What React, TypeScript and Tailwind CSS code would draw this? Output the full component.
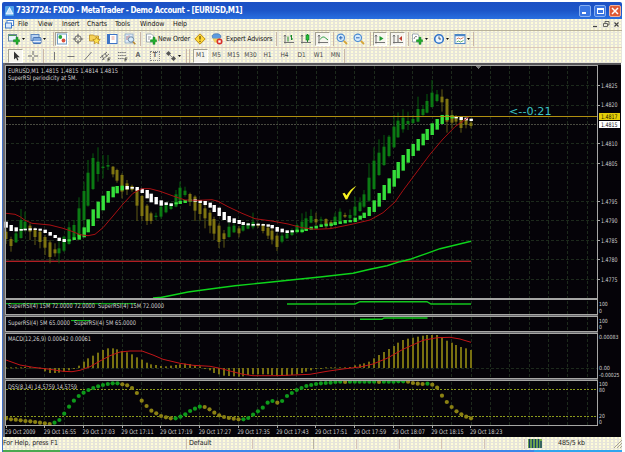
import React from "react";

type Candle = [up: number, high: number, top: number, bottom: number, low: number];
type Band = [kind: number, top: number, bottom: number];

const X0 = 6.1;
const STEP = 4.843;
const px = (i: number) => X0 + STEP * i;

// Price bars of the first section, in thirds of a pixel below y = 140
const barsA: Candle[] = [
  [0, 265, 275, 297, 312], [0, 290, 297, 318, 335], [1, 262, 280, 307, 309], [1, 207, 240, 294, 296], [1, 215, 245, 270, 275],
  [0, 250, 257, 275, 300], [0, 262, 268, 291, 315], [0, 268, 275, 306, 325], [0, 285, 291, 323, 345], [0, 300, 307, 351, 370],
  [0, 310, 328, 340, 350], [1, 300, 325, 340, 370], [1, 287, 290, 332, 336], [1, 245, 262, 312, 314], [1, 240, 255, 295, 298],
  [1, 172, 205, 290, 292], [1, 125, 153, 240, 270], [1, 60, 98, 197, 200], [1, 40, 54, 147, 150], [1, 22, 65, 102, 125],
  [1, 45, 80, 84, 115], [1, 45, 75, 80, 90], [0, 78, 80, 103, 112], [0, 86, 90, 122, 128], [0, 100, 105, 155, 175],
  [0, 120, 130, 150, 165], [0, 134, 138, 150, 155], [0, 146, 148, 197, 243], [0, 165, 168, 228, 243], [0, 192, 197, 243, 255],
  [0, 215, 220, 243, 252], [1, 218, 227, 231, 240], [1, 190, 200, 230, 236], [1, 190, 195, 217, 220], [1, 188, 192, 207, 210],
  [1, 150, 163, 200, 202], [1, 125, 143, 180, 190], [1, 140, 152, 165, 170], [0, 158, 162, 185, 198], [0, 166, 170, 212, 243],
  [0, 180, 190, 222, 243], [0, 195, 205, 235, 265], [0, 210, 218, 257, 280], [0, 230, 237, 281, 300], [0, 250, 257, 306, 324],
  [0, 270, 280, 297, 323], [1, 248, 260, 291, 293], [1, 247, 257, 277, 279], [0, 258, 265, 280, 292], [1, 250, 257, 272, 275],
  [1, 247, 252, 266, 268], [1, 218, 245, 262, 268], [0, 248, 252, 258, 264], [0, 250, 255, 273, 280], [0, 257, 263, 287, 297],
  [0, 264, 272, 299, 313], [0, 280, 287, 321, 333], [1, 280, 287, 305, 310], [1, 274, 280, 295, 297], [1, 265, 270, 285, 288],
  [1, 250, 255, 278, 280], [1, 220, 245, 278, 280], [1, 215, 235, 270, 272], [1, 208, 228, 248, 250], [0, 218, 237, 247, 255],
  [1, 230, 238, 242, 252],
];
// The rest, in thirds of a pixel below y = 70
const barsB: Candle[] = [
  [0, 445, 447, 465, 476], [0, 450, 456, 467, 474], [1, 428, 440, 465, 468], [1, 415, 425, 455, 460], [0, 428, 435, 440, 444],
  [1, 418, 435, 445, 450], [1, 380, 410, 437, 440], [1, 382, 397, 423, 426], [1, 360, 373, 410, 414], [1, 280, 323, 392, 396],
  [1, 232, 272, 357, 360], [1, 208, 248, 315, 318], [1, 195, 230, 285, 288], [1, 195, 200, 258, 262], [1, 135, 170, 232, 234],
  [1, 127, 152, 202, 204], [1, 118, 143, 178, 188], [1, 125, 153, 162, 180], [1, 135, 147, 159, 162], [1, 80, 117, 155, 157],
  [1, 105, 117, 135, 138], [1, 72, 93, 128, 130], [1, 30, 68, 111, 113], [1, 60, 73, 93, 97], [0, 58, 80, 97, 125],
  [0, 85, 87, 155, 188], [0, 120, 135, 158, 175], [0, 135, 140, 155, 165], [0, 140, 145, 174, 188], [0, 145, 150, 165, 175],
  [0, 152, 158, 168, 175],
];
const bandsA: Band[] = [
  [0, 245, 263], [0, 255, 273], [0, 262, 274], [0, 267, 272], [0, 266, 271], [0, 265, 271], [0, 265, 270], [0, 266, 272],
  [0, 269, 279], [0, 276, 287], [0, 285, 294], [0, 293, 303], [0, 297, 306], [1, 298, 304], [1, 292, 300], [1, 282, 299],
  [1, 262, 292], [1, 238, 277], [1, 208, 258], [1, 185, 235], [1, 167, 211], [1, 153, 188], [1, 140, 172], [1, 138, 160],
  [1, 137, 151], [0, 138, 148], [0, 141, 146], [0, 141, 152], [0, 146, 159], [0, 150, 175], [0, 161, 187], [0, 171, 193],
  [0, 181, 197], [0, 187, 195], [0, 190, 198], [1, 187, 193], [1, 182, 192], [1, 180, 189], [1, 178, 184], [0, 178, 185],
  [0, 180, 189], [0, 183, 195], [0, 188, 203], [0, 195, 216], [0, 203, 228], [0, 216, 240], [0, 228, 247], [0, 235, 249],
  [0, 240, 252], [0, 246, 255], [0, 250, 256], [0, 252, 257], [0, 251, 256], [0, 252, 257], [0, 253, 260], [0, 255, 265],
  [0, 261, 275], [0, 266, 277], [0, 271, 279], [0, 271, 277], [1, 269, 276], [1, 269, 276], [1, 265, 273], [1, 260, 269],
  [1, 257, 266], [1, 253, 261],
];
const bandsB: Band[] = [
  [1, 461, 469], [1, 460, 468], [1, 456, 465], [1, 454, 462], [1, 450, 460], [1, 450, 457], [1, 443, 456], [1, 437, 449],
  [1, 428, 444], [1, 411, 438], [1, 391, 426], [1, 369, 410], [1, 345, 390], [1, 325, 370], [1, 300, 350], [1, 276, 325],
  [1, 255, 302], [1, 237, 278], [1, 222, 258], [1, 207, 242], [1, 191, 226], [1, 177, 210], [1, 160, 195], [1, 147, 179],
  [1, 135, 162], [1, 135, 150], [1, 137, 145], [0, 139, 145], [0, 141, 150], [0, 143, 151], [0, 146, 153],
];
const bars: Candle[] = [
  ...barsA.map((c) => [c[0], ...c.slice(1).map((v) => 140 + v / 3)] as Candle),
  ...barsB.map((c) => [c[0], ...c.slice(1).map((v) => 70 + v / 3)] as Candle),
];
const bands: Band[] = [
  ...bandsA.map((b) => [b[0], 140 + b[1] / 3, 140 + b[2] / 3] as Band),
  ...bandsB.map((b) => [b[0], 70 + b[1] / 3, 70 + b[2] / 3] as Band),
];

const macd = [
  217, 217, 217, 217, 216, 217, 217, 218, 229, 234, 234, 233, 230, 226, 222, 212, 200, 190, 182, 173, 165, 160, 160, 163, 168, 172,
  178, 187, 194, 203, 208, 210, 213, 214, 212, 210, 208, 206, 207, 210, 214, 222, 226, 234, 238, 242, 243, 244, 245, 244, 240, 238,
  238, 238, 238, 240, 243, 243, 242, 240, 238, 234, 230, 226, 222, 221, 217, 217, 217, 217, 217, 216, 211, 208, 205, 200, 190, 180,
  171, 162, 153, 143, 135, 131, 128, 125, 122, 120, 120, 120, 127, 137, 143, 150, 156, 160, 165,
];
const dss = [
  370, 373, 374, 376, 378, 379, 381, 383, 385, 387, 383, 375, 356, 335, 317, 303, 293, 285, 279, 274, 270, 267, 265, 265, 268, 271,
  279, 294, 317, 333, 347, 355, 363, 367, 370, 370, 365, 358, 348, 341, 335, 336, 343, 353, 361, 366, 369, 371, 373, 373, 369, 359,
  349, 338, 323, 318, 323, 318, 303, 294, 285, 279, 273, 270, 267, 265, 264, 263, 261, 260, 261, 260, 260, 260, 260, 260, 260, 261,
  260, 260, 260, 259, 259, 260, 264, 266, 267, 266, 269, 278, 302, 321, 336, 349, 358, 365, 370,
];
const dssUp = (i: number) =>
  (i >= 10 && i <= 23) || (i >= 35 && i <= 40) || (i >= 49 && i <= 82 && ![56, 70, 77].includes(i)) || i === 87;

const gridX = Array.from({ length: 30 }, (_, k) => 25.5 + 19.37 * k);
const gridY = [85.5, 105.5, 143.5, 163.5, 201.5, 220.5, 240.5, 259.5, 279.5];
const prices: [string, number][] = [
  ["1.4825", 85.5], ["1.4820", 105], ["1.4810", 143.5], ["1.4805", 163.5], ["1.4795", 201.5],
  ["1.4790", 220.5], ["1.4785", 240.5], ["1.4780", 259.5], ["1.4775", 279.5],
];
const scales: [string, number][] = [
  ["100", 304], ["0", 310.5], ["100", 320.5], ["0", 327], ["0.00083", 337], ["0.00", 367.7], ["-0.00025", 375],
  ["100", 384], ["80", 389.8], ["20", 416], ["0", 422],
];
const times = ["29 Oct 2009", "29 Oct 16:55", "29 Oct 17:03", "29 Oct 17:11", "29 Oct 17:19", "29 Oct 17:27", "29 Oct 17:35",
  "29 Oct 17:43", "29 Oct 17:51", "29 Oct 17:59", "29 Oct 18:07", "29 Oct 18:15", "29 Oct 18:23"];

const redMa = "6,213.3 15,214.3 20,216.7 25,220.3 32,223.3 50,225 63,228.3 73,231.7 80,234.7 88,235.7 95,234.3 103,227.7 113,216 123,204 133,193.3 142,188.7 150,188.7 160,191.3 175,196.7 185,200 198,200.3 212,199.7 218,201.3 228,206.7 242,213.3 255,218.7 272,221 288,224 302,227.7 315,229.3 330,228.7 340,226.7 353,224 370,220 383,212.7 395,202 403,190.5 420,167.7 430,154.3 443,139 455,126.7 467,118.3 470,116";
const greenMa = "153,298 162,297.3 172,295.3 188,292 212,288.7 235,285.7 262,283 298,279.3 320,277 353,273.3 370,269.3 387,265.7 400,261.7 410,259.3 427,253.3 440,248.7 471,241.3";
const macdSignal = "6,360 20,365 33,367.3 50,369.3 63,371.3 72,371.7 80,370.3 90,366.7 100,361 110,355.7 120,352 130,351 142,351 153,355 163,359.3 180,363.3 193,365.3 210,366.3 220,368.3 230,371 243,374.3 253,375.7 277,375.7 310,374.3 327,371.3 343,369 360,367 373,364 387,358.3 403,349.3 423,340.3 437,337.7 450,337.3 460,339 471,342.3";

function Label({ x, y, w, children, fill = "#d2d2d2", size = 6.3 }: { x: number; y: number; w?: number; children: string; fill?: string; size?: number }) {
  return (
    <text x={x} y={y + 2.2} fill={fill} fontSize={size} textLength={w} lengthAdjust="spacingAndGlyphs">
      {children}
    </text>
  );
}

function Chart() {
  return (
    <svg viewBox="3 63 618 374" className="block h-[374px] w-[618px] font-['DejaVu_Sans_Condensed','Liberation_Sans',sans-serif]" shapeRendering="crispEdges">
      <rect x="3" y="63" width="618" height="374" fill="#050308" />
      <rect x="3" y="63" width="618" height="1.5" fill="#57565a" />
      <rect x="3" y="63" width="2" height="374" fill="#6b6b70" />
      <g stroke="#1d2a1c" strokeDasharray="3 2">
        {gridX.map((x) => [[66, 298], [301, 314], [317, 331], [334, 378], [382, 425]].map(([a, b]) => <line key={x + "-" + a} x1={x} x2={x} y1={a} y2={b} />))}
        {gridY.map((y) => <line key={y} x1="6" x2="597" y1={y} y2={y} />)}
        <line x1="6" x2="597" y1="368.5" y2="368.5" />
      </g>
      <line x1="6" x2="597" y1="124.5" y2="124.5" stroke="#494a40" strokeDasharray="2 1" />
      <rect x="6" y="260" width="465" height="1" fill="#3a1c1c" />
      <rect x="6" y="261" width="465" height="1" fill="#b01c22" />
      <path d="M476 66h5l-2.500 3z" fill="#777" />

      {bars.map(([up, hi, top, bot, lo], i) => (
        <g key={i}>
          <rect x={Math.round(px(i)) - 0.5} y={hi} width="1" height={lo - hi} fill={up ? "#075a0d" : "#615a14"} shapeRendering="auto" />
          <rect x={Math.round(px(i)) - 1.5} y={top} width="3" height={Math.max(bot - top, 1)} fill={up ? "#0b7a13" : "#7e7410"} shapeRendering="auto" />
        </g>
      ))}
      {bands.map(([kind, top, bot], i) => (
        <rect key={i} x={Math.round(px(i)) - 1.5} y={top} width="3.4" height={bot - top} fill={kind ? "#35df3a" : "#fff"} shapeRendering="auto" />
      ))}
      <polyline points={redMa} fill="none" stroke="#a80f12" shapeRendering="auto" />
      <polyline points={greenMa} fill="none" stroke="#0dd41b" strokeWidth="1.4" shapeRendering="auto" />
      <line x1="6" x2="597" y1="116.500" y2="116.500" stroke="#b08f10" />
      <path d="M342.500 193.500l2-.8 2 2.800c2-4 5.500-7.300 10-9.800-3.700 3.700-6.600 8-9.200 13.500l-1.700.3z" fill="#f6f020" shapeRendering="auto" />
      <text x="509" y="115" fontSize="9.800" fill="#3cc4c4" textLength="42.500" lengthAdjust="spacingAndGlyphs" fontFamily="DejaVu Sans, sans-serif">{"<--0:21"}</text>

      <g fill="none" stroke="#12c51d" strokeWidth="1.4" shapeRendering="auto">
        <path d="M287 304H355L360 301.700H427L431 304H471" />
        <path d="M360 319.300H382L384 318H427.500" />
        <path d="M6 303.700H136" strokeWidth="1" />
        <path d="M71 320.600H90" strokeWidth="1" />
      </g>

      {macd.map((v, i) => {
        const y = 295 + v / 3;
        return <rect key={i} x={Math.round(px(i)) - 1} y={Math.min(y, 368)} width="2" height={Math.max(Math.abs(368 - y), 1)} fill="#787010" shapeRendering="auto" />;
      })}
      <polyline points={macdSignal} fill="none" stroke="#c31518" shapeRendering="auto" />

      <g strokeDasharray="2 1.500" stroke="#8c9a1c">
        <line x1="6" x2="597" y1="389.500" y2="389.500" />
        <line x1="6" x2="597" y1="416.500" y2="416.500" />
      </g>
      {dss.map((v, i) => (
        <circle key={i} cx={px(i)} cy={295 + v / 3} r="2.100" fill={dssUp(i) ? "#0e9a1b" : "#8b8113"} shapeRendering="auto" />
      ))}

      <g fill="#a6a6a4">
        <rect x="5" y="65" width="593" height="1" />
        <rect x="5" y="65" width="1" height="361" />
        <rect x="5" y="298" width="593" height="2" />
        <rect x="5" y="314" width="593" height="1" />
        <rect x="5" y="316" width="593" height="1" />
        <rect x="5" y="331" width="593" height="1" />
        <rect x="5" y="333" width="593" height="1" />
        <rect x="5" y="378" width="593" height="1" />
        <rect x="5" y="380" width="593" height="1" />
        <rect x="5" y="425" width="593" height="1" />
        <rect x="597" y="65" width="1" height="361" />
        {prices.map(([t, y]) => <rect key={t} x="598" y={Math.floor(y)} width="2" height="1" />)}
        {times.map((t, k) => <rect key={t} x={Math.round(5.500 + k * 38.740)} y="426" width="1" height="2" />)}
      </g>
      <g fill="#66666a">
        <rect x="5" y="315" width="593" height="1" />
        <rect x="5" y="332" width="593" height="1" />
        <rect x="5" y="379" width="593" height="1" />
      </g>

      <Label x={8} y={71} w={110}>EURUSD,M1  1.4815 1.4815 1.4814 1.4815</Label>
      <Label x={8} y={77.300} w={69}>SuperRSI periodicity at 5M.</Label>
      <Label x={8} y={306} w={87}>SuperRSI(4) 15M 72.0000 72.0000</Label>
      <Label x={98} y={306} w={66}>SuperRSI(4) 15M 72.0000</Label>
      <Label x={8} y={322.500} w={62}>SuperRSI(4) 5M 65.0000</Label>
      <Label x={74} y={322.500} w={62}>SuperRSI(4) 5M 65.0000</Label>
      <Label x={8} y={338.500} w={83}>MACD(12,26,9) 0.00042 0.00061</Label>
      <Label x={8} y={386.700} w={69}>DSS(8,14) 14.5759 14.5759</Label>

      {prices.map(([t, y]) => <Label key={t} x={601} y={y} w={16.500}>{t}</Label>)}
      <rect x="599" y="113" width="20.500" height="6.500" fill="#e6cf08" />
      <rect x="599" y="121" width="20.500" height="6.500" fill="#fff" />
      <Label x={601} y={116.300} w={16.500} fill="#201800">1.4817</Label>
      <Label x={601} y={124.300} w={16.500} fill="#111">1.4815</Label>
      {scales.map(([t, y]) => (
        <Label key={t + y} x={599} y={y} size={5.600} w={t.length > 7 ? 20.500 : t.length > 4 ? 19.500 : t.length > 3 ? 11 : t.length * 2.900}>{t}</Label>
      ))}
      {times.map((t, k) => <Label key={t} x={5 + k * 38.740} y={431.500} w={k ? 32.500 : 30.500}>{t}</Label>)}
    </svg>
  );
}

const Ico = ({ className, children }: { className: string; children: React.ReactNode }) => (
  <svg viewBox="0 0 12 12" className={"h-3 w-3 shrink-0 " + className} fill="none">{children}</svg>
);
const Boxed = ({ className, children }: { className: string; children: React.ReactNode }) => (
  <div className={"flex h-[14px] shrink-0 items-center justify-center border border-r-white border-b-white border-l-[#a5a292] border-t-[#a5a292] bg-[#f6f5ee] " + className}>{children}</div>
);
const Caret = ({ className }: { className: string }) => (
  <svg viewBox="0 0 3 2" className={"h-[2px] w-[3px] shrink-0 " + className}><path d="M0 0h3L1.500 2z" fill="#111" /></svg>
);
const Sep = ({ className }: { className: string }) => <div className={"h-[14px] w-px shrink-0 bg-[#cbb8a6] " + className} />;

const plus = <path d="M6 6h2.500v-2.500h2v2.500H12v2h-1.500v2.500h-2V8H6z" transform="translate(-.5 .8)" fill="#22b02c" stroke="#0b7a18" strokeWidth=".5" />;
const axes = <path d="M2 2v8.500M1 9.500h10M2 2l-1 1.500M2 2l1 1.500" stroke="#666" strokeWidth=".9" />;

function TopToolbar() {
  return (
    <div className="flex h-[17px] items-center border-t border-[#b9b29a] text-[7px] tracking-[-0.2px] text-[#151515]">
      <Ico className="ml-[5px]"><rect x=".5" y="1.500" width="8" height="6.500" fill="#e9f3ff" stroke="#6b8b9b" /><path d="M1 2.500h7" stroke="#4b9a50" />{plus}</Ico>
      <Caret className="ml-[2px]" />
      <Ico className="ml-[5px]"><rect x="1" y="1.500" width="8" height="6" fill="#b9d3f3" stroke="#5d86bd" /><rect x="3" y="4.500" width="8" height="6" rx="1" fill="#7fa9df" stroke="#4a74b2" /><path d="M3 8.500h8" stroke="#fff" strokeWidth=".8" /></Ico>
      <Caret className="ml-px" />
      <Sep className="ml-[7px]" />
      <Boxed className="ml-px w-[13px]"><Ico className="-m-px"><rect x="1.500" y="1" width="9" height="10" fill="#fff" stroke="#74a1c8" /><circle cx="4.300" cy="4" r="1.900" fill="#27a53a" /><circle cx="7.500" cy="7.500" r="1.900" fill="#d8503c" /></Ico></Boxed>
      <Ico className="ml-1"><circle cx="6" cy="6" r="3.300" stroke="#666" /><path d="M6 .8v4M6 7.200v4M.8 6h4M7.200 6h4" stroke="#666" /></Ico>
      <Ico className="ml-[5px]"><path d="M.5 2h4l1 1h4v5h-9z" fill="#f5d25a" stroke="#b78a1c" strokeWidth=".8" /><path d="M7.500 4l1.200 2.300 2.600.3-1.900 1.700.5 2.500-2.400-1.200-2.300 1.200.4-2.500-1.800-1.700 2.500-.3z" fill="#ffe34d" stroke="#b07e12" strokeWidth=".7" /></Ico>
      <Ico className="ml-[5px]"><rect x="1.500" y="1.500" width="9.500" height="9" fill="#fff" stroke="#3d74c6" /><path d="M3 2v8" stroke="#3d74c6" strokeWidth="2" /><path d="M5.500 4h3M5.500 6h3" stroke="#d87a6a" strokeWidth=".7" /></Ico>
      <Ico className="ml-[6px]"><rect x="1" y="1" width="8" height="9" fill="#dce9f7" stroke="#8ba7c2" strokeWidth=".8" /><path d="M3 3v4M5 2.500v3" stroke="#b06060" strokeWidth=".8" /><circle cx="7" cy="6.500" r="2.700" fill="#d7ecfb" stroke="#6d8aa6" /><path d="M9 8.700l2.300 2.500" stroke="#b8862b" strokeWidth="1.500" /></Ico>
      <Sep className="ml-1" />
      <Ico className="ml-1"><path d="M1.500 1h5l2 2v6h-7z" fill="#fff" stroke="#8b9aa5" strokeWidth=".8" /><path d="M3 4h3M3 6h2" stroke="#777" strokeWidth=".7" />{plus}</Ico>
      <span className="ml-px w-8 whitespace-nowrap">New Order</span>
      <Ico className="ml-[4px]"><path d="M6 .8L11.200 6 6 11.200.8 6z" fill="#ffd83a" stroke="#b98a12" /><path d="M6 3v3.500M6 7.800v1.200" stroke="#5e4a08" strokeWidth="1.200" /></Ico>
      <Ico className="ml-[5px]"><ellipse cx="5.500" cy="3.500" rx="4.300" ry="2.800" fill="#5d9be0" stroke="#366cad" strokeWidth=".7" /><path d="M1.500 5.500h8l-1 4h-5z" fill="#f0cf62" /><circle cx="8.500" cy="8.500" r="3" fill="#d8302a" /><rect x="7.300" y="7.300" width="2.400" height="2.400" fill="#fff" /></Ico>
      <span className="ml-[3px] w-[46px] whitespace-nowrap">Expert Advisors</span>
      <Sep className="ml-1" />
      <Ico className="ml-[6px]">{axes}<path d="M5 3.500v5M8.500 2v5M7 3h1.500M8.500 6H10" stroke="#16892a" /></Ico>
      <Ico className="ml-[5px]">{axes}<path d="M7.500 1v8" stroke="#16892a" /><rect x="6" y="2" width="3" height="5" fill="#24bf38" stroke="#117a20" strokeWidth=".6" /></Ico>
      <Boxed className="ml-[3px] w-[15px]"><Ico className="-m-px">{axes}<path d="M3 6.500c2-3 4-3 5.500-1.500L11 7" stroke="#22993a" /></Ico></Boxed>
      <Sep className="ml-[3px]" />
      <Ico className="ml-[2px]"><circle cx="4.800" cy="4.800" r="3.700" fill="#d5eafc" stroke="#4a8bd0" strokeWidth="1.100" /><path d="M3 4.800h3.600M4.800 3v3.600" stroke="#2a66b5" /><path d="M7.800 7.800l3.200 3.200" stroke="#d5a437" strokeWidth="1.800" /></Ico>
      <Ico className="ml-[5px]"><circle cx="4.800" cy="4.800" r="3.700" fill="#d5eafc" stroke="#4a8bd0" strokeWidth="1.100" /><path d="M3 4.800h3.600" stroke="#2a66b5" /><path d="M7.800 7.800l3.200 3.200" stroke="#d5a437" strokeWidth="1.800" /></Ico>
      <Sep className="ml-[5px]" />
      <Boxed className="ml-[2px] w-[14px]"><Ico className="-m-px">{axes}<path d="M5.500 3l4 2.500-4 2.500z" fill="#1f9c30" /></Ico></Boxed>
      <Boxed className="ml-[3px] w-[15px]"><Ico className="-m-px">{axes}<path d="M6 2v7" stroke="#666" /><path d="M10 3L7 5.500 10 8z" fill="#c0392b" /></Ico></Boxed>
      <Sep className="ml-[3px]" />
      <Ico className="ml-[2px]"><path d="M1.500 1h5l1.500 2v6H1.500z" fill="#fff" stroke="#8b9aa5" strokeWidth=".8" /><path d="M3 6c1-3 2-3 3-2" stroke="#555" strokeWidth=".8" />{plus}</Ico>
      <Caret className="ml-[2px]" />
      <Ico className="ml-[5px]"><circle cx="6" cy="6" r="4.300" fill="#e9f4ff" stroke="#2f73c9" strokeWidth="1.600" /><path d="M6 3.500V6h2" stroke="#345" strokeWidth=".9" /></Ico>
      <Caret className="ml-px" />
      <Ico className="ml-[5px]"><rect x="1" y="1.500" width="10" height="9" fill="#fff" stroke="#4b86c6" /><path d="M1 2.500h10" stroke="#4b86c6" strokeWidth="1.500" /><path d="M2.500 6l2-1 2 1 3-1.500" stroke="#c2603a" strokeWidth=".8" /><path d="M2.500 9l2-1 2 1 3-1.500" stroke="#3f9a4a" strokeWidth=".8" /></Ico>
      <Caret className="ml-px" />
      <Sep className="ml-[3px]" />
    </div>
  );
}

function DrawToolbar() {
  const frames = ["M5", "M15", "M30", "H1", "H4", "D1", "W1", "MN"];
  return (
    <div className="flex h-4 items-center border-t border-[#dcc9b9]">
      <Boxed className="ml-[5px] w-[15px]"><Ico className="-m-px"><path d="M4 1.500v8l2-1.800 1.300 2.800 1.200-.6L7.200 7.200h2.600z" fill="#333" /></Ico></Boxed>
      <Ico className="ml-[4px]"><path d="M6 1v4M6 7v4M1 6h4M7 6h4" stroke="#666" /></Ico>
      <Sep className="ml-[4px]" />
      <Ico className="ml-1"><path d="M6.500 2v8" stroke="#777" /></Ico>
      <Ico className="ml-[5px]"><path d="M2.500 6.500h7" stroke="#777" /></Ico>
      <Ico className="ml-[5px]"><path d="M2.500 10l7-8" stroke="#777" /></Ico>
      <Ico className="ml-[5px]"><path d="M1 8l7-6M3 10l7-6M3 5l2 5M6 3l2 4" stroke="#666" strokeWidth=".9" /><path d="M9 8h2.500M9 8v3.500M9 9.700h2" stroke="#333" strokeWidth=".8" /></Ico>
      <Ico className="ml-[5px]"><path d="M2 2.500h8M2 5.500h8M2 8.500h6" stroke="#777" strokeDasharray="1.500 .6" /><path d="M9 8h2.500M9 8v3.500M9 9.700h2" stroke="#333" strokeWidth=".8" /></Ico>
      <span className="ml-[4px] w-3 text-center text-[7px] font-bold text-[#666]">A</span>
      <span className="ml-[6px] flex h-[10px] w-[10px] items-center justify-center border border-dotted border-[#888] text-[7px] font-bold leading-none text-[#666]">T</span>
      <Ico className="ml-[5px]"><path d="M1 3.500L3.500 1 6 3.500 3.500 6z" fill="#555" /><path d="M6 8.500L8.500 6 11 8.500 8.500 11z" fill="#555" /><path d="M5 5l3 3" stroke="#888" /></Ico>
      <Caret className="ml-px" />
      <Sep className="ml-[5px]" />
      <Sep className="ml-[2px]" />
      <Boxed className="ml-[3px] w-[15px]"><span className="text-[6.5px] text-[#444]">M1</span></Boxed>
      {frames.map((f) => (
        <span key={f} className="w-[17px] shrink-0 text-center text-[6.5px] text-[#4a4a4a]">{f}</span>
      ))}
      <Sep className="ml-0" />
    </div>
  );
}

const beige = "bg-[#e7e5da] bg-[radial-gradient(circle_at_1px_1px,#fffdd8_0.7px,transparent_0.9px)] bg-[length:4px_3px]";

export default function App() {
  const menus = [["File", "w-5"], ["View", "w-6"], ["Insert", "w-[25px]"], ["Charts", "w-7"], ["Tools", "w-[25px]"], ["Window", "w-[33px]"], ["Help", "w-5"]];
  return (
    <div className="h-[452px] w-[625px] overflow-hidden bg-white pl-[2px] pt-[2px] font-['DejaVu_Sans_Condensed','Liberation_Sans',sans-serif]">
      <div className="flex h-[450px] w-[620px] flex-col">
        <header className="flex h-[17px] shrink-0 items-center rounded-t-[2px] bg-linear-to-b from-[#1b50c4] via-[#1c55c8] to-[#2a6fe0] pl-[3px] text-white">
          <svg viewBox="0 0 9 10" className="h-[10px] w-[9px]"><rect width="9" height="10" rx="1" fill="#4fa0e8" /><path d="M4.500 1.500l3.500 6.500H1z" fill="#bfe0ff" stroke="#fff" strokeWidth=".8" /></svg>
          <h1 className="ml-[2px] whitespace-nowrap text-[8px] font-bold leading-none tracking-[-0.37px]">7337724: FXDD - MetaTrader - Demo Account - [EURUSD,M1]</h1>
          <div className="ml-auto flex gap-[3px] pr-px">
            <span className="flex h-[12px] w-[12px] items-end rounded-[2px] border border-[#86aef0] bg-[#3a75e2] p-[2px]"><i className="h-[2px] w-1 bg-white" /></span>
            <span className="flex h-[12px] w-[12px] items-center justify-center rounded-[2px] border border-[#86aef0] bg-[#3a75e2]"><i className="h-[6px] w-[7px] border border-t-2 border-white" /></span>
            <svg viewBox="0 0 12 12" className="h-3 w-3"><rect x=".5" y=".5" width="11" height="11" rx="1.500" fill="#df5a35" stroke="#f0b09a" /><path d="M3 3l6 6M9 3l-6 6" stroke="#fff" strokeWidth="1.500" /></svg>
          </div>
        </header>
        <div className="flex grow flex-col border-l border-[#3f6fc8]">
          <nav className={"flex h-[11px] shrink-0 items-center text-[7px] leading-none tracking-[-0.1px] text-[#151515] " + beige}>
            <svg viewBox="0 0 9 9" className="ml-[2px] mr-1 h-[9px] w-[9px]"><rect x="2" y=".5" width="6.500" height="5" fill="#fff" stroke="#4b86d0" /><rect x=".5" y="3" width="6" height="5" fill="#d8e9fc" stroke="#3f7bcb" /></svg>
            {menus.map(([m, w]) => <span key={m} className={"shrink-0 whitespace-nowrap " + w}>{m}</span>)}
            <svg viewBox="0 0 30 9" className="ml-auto mr-[2px] h-[9px] w-[30px]" fill="none" stroke="#444"><path d="M3 6.500h4" strokeWidth="1.200" /><path d="M13.500 3.500h4v3h-4zM15 3V1.500h4V5h-1" strokeWidth=".8" /><path d="M24.500 2.500l4 4M28.500 2.500l-4 4" strokeWidth="1.100" /></svg>
          </nav>
          <div className={"h-[33px] shrink-0 " + beige}>
            <TopToolbar />
            <DrawToolbar />
          </div>
          <Chart />
          <footer className={"flex h-[13px] shrink-0 items-center text-[7px] tracking-[-0.1px] text-[#222] " + beige}>
            <span className="w-[183px] shrink-0">For Help, press F1</span>
            <span className="flex h-[10px] w-[66px] shrink-0 items-center border-l border-[#cdbdaf] pl-[2px]">Default</span>
            <span className="h-[10px] w-[61px] border-l border-[#d6c4b6]" />
            <span className="h-[10px] w-[43px] border-l border-[#b9b3a2]" />
            <span className="h-[10px] w-[43px] border-l border-[#d6c4b6]" />
            <span className="h-[10px] w-[42px] border-l border-[#d6c4b6]" />
            <span className="h-[10px] w-[43px] border-l border-[#d6c4b6]" />
            <span className="h-[10px] w-[40px] border-l border-[#d6c4b6]" />
            <span className="flex h-[10px] w-[34px] shrink-0 items-center border-l border-[#d6c4b6] pl-[3px]">
              <svg viewBox="0 0 14 9" className="h-[9px] w-[14px]"><rect width="14" height="9" fill="#7ab04a" /><path d="M1.500 0v9M4.500 0v9M7.500 0v9M10.500 0v9M13 2v7" stroke="#173f6e" strokeWidth="1.300" /></svg>
            </span>
            <span className="whitespace-nowrap">485/5 kb</span>
            <svg viewBox="0 0 9 9" className="ml-auto h-[9px] w-[9px]"><path d="M1 9l8-8M4 9l5-5M7 9l2-2" stroke="#aaa593" strokeWidth="1" /></svg>
          </footer>
          <div className="flex h-[2px] shrink-0 bg-[#3b86ea]"><div className="w-[57px] bg-[#4aa850]" /><div className="ml-auto w-[88px] bg-[#30a5ee]" /></div>
        </div>
      </div>
    </div>
  );
}
